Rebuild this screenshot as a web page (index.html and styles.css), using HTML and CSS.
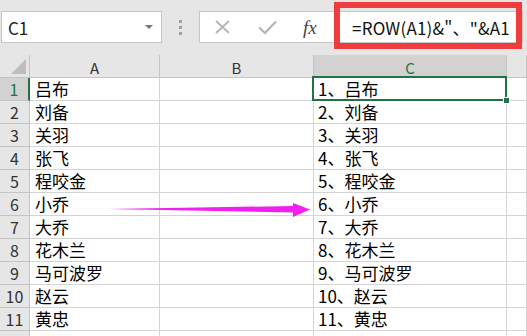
FILE: index.html
```html
<!DOCTYPE html>
<html lang="zh-CN">
<head>
<meta charset="utf-8">
<link rel="stylesheet" href="styles.css">
</head>
<body>
<div class="app">
  <div class="topbar">
    <div class="namebox"><span class="name">C1</span><span class="dd"></span></div>
    <div class="dots"><i></i><i></i><i></i></div>
    <div class="fbar">
      <svg class="ico" width="100" height="32" viewBox="0 0 100 32">
        <path d="M16 10 L29 22 M29 10 L16 22" stroke="#b4b4b4" stroke-width="1.8" fill="none"/>
        <path d="M59 16.5 L65 22 L76 10.5" stroke="#b4b4b4" stroke-width="2.2" fill="none"/>
      </svg>
      <span class="fx">fx</span>
      <span class="formula">=ROW(A1)&amp;"、"&amp;A1</span>
    </div>
  </div>
  <div class="sheet">
    <div class="corner"><span class="tri"></span></div>
    <div class="ch">A</div><div class="ch">B</div><div class="ch sel">C</div><div class="ch"></div>

    <div class="rh sel">1</div><div class="c">吕布</div><div class="c"></div><div class="c c3">1、吕布</div><div class="c"></div>
    <div class="rh">2</div><div class="c">刘备</div><div class="c"></div><div class="c c3">2、刘备</div><div class="c"></div>
    <div class="rh">3</div><div class="c">关羽</div><div class="c"></div><div class="c c3">3、关羽</div><div class="c"></div>
    <div class="rh">4</div><div class="c">张飞</div><div class="c"></div><div class="c c3">4、张飞</div><div class="c"></div>
    <div class="rh">5</div><div class="c">程咬金</div><div class="c"></div><div class="c c3">5、程咬金</div><div class="c"></div>
    <div class="rh">6</div><div class="c">小乔</div><div class="c"></div><div class="c c3">6、小乔</div><div class="c"></div>
    <div class="rh">7</div><div class="c">大乔</div><div class="c"></div><div class="c c3">7、大乔</div><div class="c"></div>
    <div class="rh">8</div><div class="c">花木兰</div><div class="c"></div><div class="c c3">8、花木兰</div><div class="c"></div>
    <div class="rh">9</div><div class="c">马可波罗</div><div class="c"></div><div class="c c3">9、马可波罗</div><div class="c"></div>
    <div class="rh">10</div><div class="c">赵云</div><div class="c"></div><div class="c c3">10、赵云</div><div class="c"></div>
    <div class="rh">11</div><div class="c">黄忠</div><div class="c"></div><div class="c c3">11、黄忠</div><div class="c"></div>
    <div class="rh"></div><div class="c"></div><div class="c"></div><div class="c"></div><div class="c"></div>
  </div>
  <div class="redbox"></div>
  <div class="selection"><span class="handle"></span></div>
  <svg class="arrow" width="527" height="336" viewBox="0 0 527 336">
    <polygon points="108,209 293,206 293,203 310,209.5 293,217 293,212.5" fill="#f020f0"/>
  </svg>
</div>
</body>
</html>
```

FILE: styles.css
```css
* { box-sizing: border-box; }
html, body { margin: 0; padding: 0; }
body {
  width: 527px;
  height: 336px;
  overflow: hidden;
  background: #fff;
  font-family: "Noto Sans CJK SC", "Liberation Sans", sans-serif;
}
.app { position: relative; width: 527px; height: 336px; overflow: hidden; }

.topbar {
  height: 55px;
  background: #e6e6e6;
  display: flex;
  align-items: flex-start;
  padding-top: 11px;
}
.namebox {
  margin-left: 1px;
  width: 161px;
  height: 32px;
  background: #fff;
  border: 1px solid #c6c6c6;
  display: flex;
  align-items: center;
  justify-content: space-between;
  padding: 0 8px 0 6px;
}
.name { font-size: 17px; color: #222; line-height: 1; }
.dd {
  width: 0; height: 0;
  border-left: 4px solid transparent;
  border-right: 4px solid transparent;
  border-top: 4px solid #777;
}
.dots {
  width: 37px;
  height: 32px;
  display: flex;
  flex-direction: column;
  align-items: center;
  justify-content: center;
  gap: 3px;
}
.dots i { display: block; width: 3px; height: 3px; background: #a0a0a0; }
.fbar {
  width: 324px;
  height: 32px;
  background: #fff;
  border: 1px solid #c6c6c6;
  display: flex;
  align-items: center;
}
.ico { flex: none; }
.fx {
  font-family: "Liberation Serif", serif;
  font-style: italic;
  font-size: 19px;
  color: #444;
  margin-left: 3px;
  width: 49px;
  line-height: 1;
}
.formula {
  font-size: 17px;
  letter-spacing: 0.2px;
  color: #111;
  white-space: nowrap;
  line-height: 1;
}

.sheet {
  display: grid;
  grid-template-columns: 30px 130px 154px 193px 1fr;
  grid-template-rows: 23px;
  grid-auto-rows: 23px;
}
.corner, .ch, .rh {
  background: #e6e6e6;
  border-right: 1px solid #c4c4c4;
  border-bottom: 1px solid #c4c4c4;
  color: #333;
}
.corner { position: relative; }
.tri {
  position: absolute;
  right: 3px;
  bottom: 3px;
  width: 0; height: 0;
  border-left: 15px solid transparent;
  border-bottom: 15px solid #bdbdbd;
}
.ch {
  font-size: 15px;
  display: flex;
  align-items: center;
  justify-content: center;
  line-height: 1;
  padding-top: 2px;
}
.ch.sel { background: #d2d2d2; color: #217346; }
.rh {
  font-size: 16px;
  display: flex;
  align-items: center;
  justify-content: center;
  line-height: 1;
}
.rh.sel { background: #d2d2d2; color: #217346; border-right: 2px solid #217346; }
.c {
  border-right: 1px solid #d4d4d4;
  border-bottom: 1px solid #d4d4d4;
  font-size: 17px;
  line-height: 22px;
  color: #000;
  padding-left: 5px;
  white-space: nowrap;
}
.c3 { padding-left: 4px; }

.redbox {
  position: absolute;
  left: 334px;
  top: 2px;
  width: 188px;
  height: 47px;
  border: 6px solid #f03c3c;
}
.selection {
  position: absolute;
  left: 312px;
  top: 76px;
  width: 195px;
  height: 25px;
  border: 2px solid #217346;
}
.handle {
  position: absolute;
  right: -5px;
  bottom: -5px;
  width: 7px;
  height: 7px;
  background: #217346;
  border: 1px solid #fff;
}
.arrow { position: absolute; left: 0; top: 0; }
```
